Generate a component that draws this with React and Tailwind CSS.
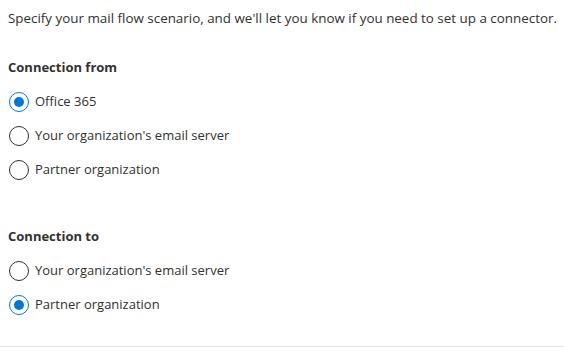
import React from "react";

function Radio({ checked, label }) {
  return (
    <div className="flex items-center h-[34px]">
      <span
        className={
          "w-[20px] h-[20px] rounded-full border flex items-center justify-center shrink-0 " +
          (checked ? "border-[#0078d4]" : "border-[#323130]")
        }
      >
        {checked && <span className="w-[10px] h-[10px] rounded-full bg-[#0078d4]" />}
      </span>
      <span className="ml-[6px] text-[13px] text-[#323130]">{label}</span>
    </div>
  );
}

export default function App() {
  return (
    <div
      className="w-[564px] h-[359px] bg-white text-[#323130]"
      style={{ fontFamily: '"Open Sans", "Noto Sans", sans-serif' }}
    >
      <div className="h-[347px] border-b border-[#e5e5e5] pl-[8px]">
        <p className="pt-[8px] text-[13.4px] leading-[20px]">
          Specify your mail flow scenario, and we'll let you know if you need to set up a connector.
        </p>
        <h3 className="mt-[29px] text-[13px] font-bold leading-[20px]">Connection from</h3>
        <div className="mt-[8px] pl-[1px]">
          <Radio checked label="Office 365" />
          <Radio label="Your organization's email server" />
          <Radio label="Partner organization" />
        </div>
        <h3 className="mt-[39px] text-[13px] font-bold leading-[20px]">Connection to</h3>
        <div className="mt-[8px] pl-[1px]">
          <Radio label="Your organization's email server" />
          <Radio checked label="Partner organization" />
        </div>
      </div>
    </div>
  );
}
